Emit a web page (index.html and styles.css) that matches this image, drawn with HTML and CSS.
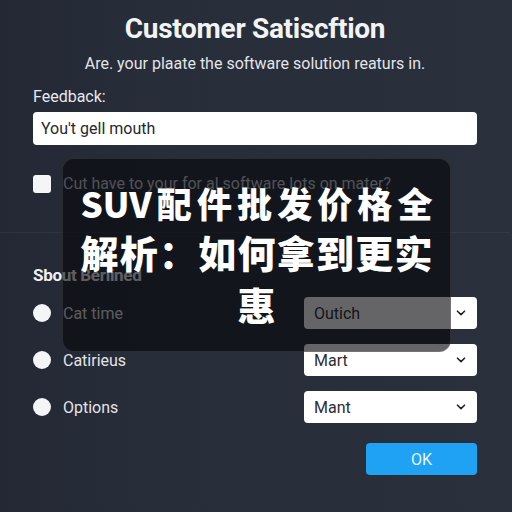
FILE: index.html
```html
<!DOCTYPE html>
<html lang="en">
<head>
<meta charset="utf-8">
<title>Customer Satisfaction</title>
<link rel="stylesheet" href="styles.css">
</head>
<body>
<main class="survey">
  <h1 class="title">Customer Satiscftion</h1>
  <p class="subtitle">Are. your plaate the software solution reaturs in.</p>

  <label class="field-label" for="feedback">Feedback:</label>
  <input id="feedback" class="text-input" type="text" value="You't gell mouth">

  <div class="check-row">
    <span class="checkbox"></span>
    <span class="check-text">Cut have to your for al software lots on mater?</span>
  </div>

  <hr class="divider">

  <h2 class="section-title">Sbout Berlined</h2>

  <div class="option-list">
    <div class="option-row">
      <span class="radio"></span>
      <span class="option-label">Cat time</span>
      <div class="select"><span>Outich</span><svg class="chev" viewBox="0 0 10 6" width="10" height="6"><path d="M1.5 1.2 L5 4.6 L8.5 1.2" fill="none" stroke="#222" stroke-width="1.6" stroke-linecap="round" stroke-linejoin="round"/></svg></div>
    </div>
    <div class="option-row">
      <span class="radio"></span>
      <span class="option-label">Catirieus</span>
      <div class="select"><span>Mart</span><svg class="chev" viewBox="0 0 10 6" width="10" height="6"><path d="M1.5 1.2 L5 4.6 L8.5 1.2" fill="none" stroke="#222" stroke-width="1.6" stroke-linecap="round" stroke-linejoin="round"/></svg></div>
    </div>
    <div class="option-row">
      <span class="radio"></span>
      <span class="option-label">Options</span>
      <div class="select"><span>Mant</span><svg class="chev" viewBox="0 0 10 6" width="10" height="6"><path d="M1.5 1.2 L5 4.6 L8.5 1.2" fill="none" stroke="#222" stroke-width="1.6" stroke-linecap="round" stroke-linejoin="round"/></svg></div>
    </div>
  </div>

  <div class="actions">
    <button class="ok-btn" type="button">OK</button>
  </div>
</main>

<div class="banner">
  <p class="banner-text"><span class="line first">SUV配件批发价格全</span><span class="line second">解析：如何拿到更实</span><span class="line last">惠</span></p>
</div>
</body>
</html>
```

FILE: styles.css
```css
html, body {
  margin: 0;
  padding: 0;
}

body {
  width: 512px;
  height: 512px;
  overflow: hidden;
  position: relative;
  background: linear-gradient(90deg, #232834 0%, #272d39 30%, #282e3a 70%, #2a303c 100%);
  font-family: Roboto, "Liberation Sans", Arial, sans-serif;
  color: #e8eaee;
}

.survey {
  padding: 12px 35px 0 33px;
  display: flex;
  flex-direction: column;
}

.title {
  margin: 0;
  text-align: center;
  font-size: 28px;
  line-height: 34px;
  font-weight: 700;
  color: #f2f3f5;
  letter-spacing: -0.3px;
}

.subtitle {
  margin: 8px 0 0;
  text-align: center;
  font-size: 16px;
  line-height: 20px;
  color: #e2e4e8;
}

.field-label {
  margin-top: 13px;
  font-size: 16px;
  line-height: 20px;
  color: #e6e8ec;
}

.text-input {
  margin-top: 5px;
  box-sizing: border-box;
  width: 100%;
  height: 33px;
  border: none;
  border-radius: 4px;
  background: #ffffff;
  padding: 0 8px;
  font-family: Roboto, "Liberation Sans", Arial, sans-serif;
  font-size: 16px;
  color: #26282c;
  outline: none;
}

.check-row {
  margin-top: 30px;
  display: flex;
  align-items: center;
  gap: 12px;
  height: 18px;
}

.checkbox {
  width: 18px;
  height: 18px;
  border-radius: 3px;
  background: #f4f5f7;
  flex: none;
}

.check-text {
  font-size: 16px;
  line-height: 18px;
  color: #c8cbd2;
}

.divider {
  margin: 39px -33px 0;
  border: none;
  height: 1px;
  background: rgba(255, 255, 255, 0.05);
}

.section-title {
  margin: 32px 0 0;
  font-size: 17px;
  line-height: 20px;
  font-weight: 700;
  letter-spacing: -0.3px;
  color: #eef0f3;
}

.option-list {
  margin-top: 12px;
  display: flex;
  flex-direction: column;
  gap: 15px;
}

.option-row {
  display: flex;
  align-items: center;
  height: 32px;
}

.radio {
  width: 18px;
  height: 18px;
  border-radius: 50%;
  background: #f4f5f7;
  flex: none;
}

.option-label {
  margin-left: 12px;
  font-size: 16px;
  color: #e2e4e8;
  flex: 1;
}

.select {
  box-sizing: border-box;
  width: 173px;
  height: 32px;
  border-radius: 4px;
  background: #ffffff;
  display: flex;
  align-items: center;
  justify-content: space-between;
  padding: 0 11px 0 10px;
  font-size: 16px;
  color: #2c2e33;
}

.chev {
  display: block;
}

.actions {
  margin-top: 20px;
  display: flex;
  justify-content: flex-end;
}

.ok-btn {
  width: 111px;
  height: 32px;
  border: none;
  border-radius: 4px;
  background: #1fa2f3;
  color: #e8f6ff;
  font-family: Roboto, "Liberation Sans", Arial, sans-serif;
  font-size: 16px;
}

/* headline card laid over the form */
.banner {
  position: absolute;
  left: 62px;
  top: 158px;
  width: 389px;
  height: 194px;
  box-sizing: border-box;
  border-radius: 12px;
  background: rgba(6, 7, 10, 0.62);
  border: 1px solid rgba(255, 255, 255, 0.1);
  display: flex;
  align-items: center;
  justify-content: center;
}

.banner-text {
  margin: 0;
  width: 352px;
  font-family: "Noto Sans CJK SC", "Noto Sans", sans-serif;
  font-weight: 900;
  color: #ffffff;
}

.line {
  display: block;
  white-space: nowrap;
  text-align: justify;
  text-align-last: justify;
}

.line.first {
  font-size: 35px;
  line-height: 48px;
}

.line.second {
  font-size: 38px;
  line-height: 50px;
}

.line.last {
  font-size: 38px;
  line-height: 54px;
  text-align-last: center;
}
```
